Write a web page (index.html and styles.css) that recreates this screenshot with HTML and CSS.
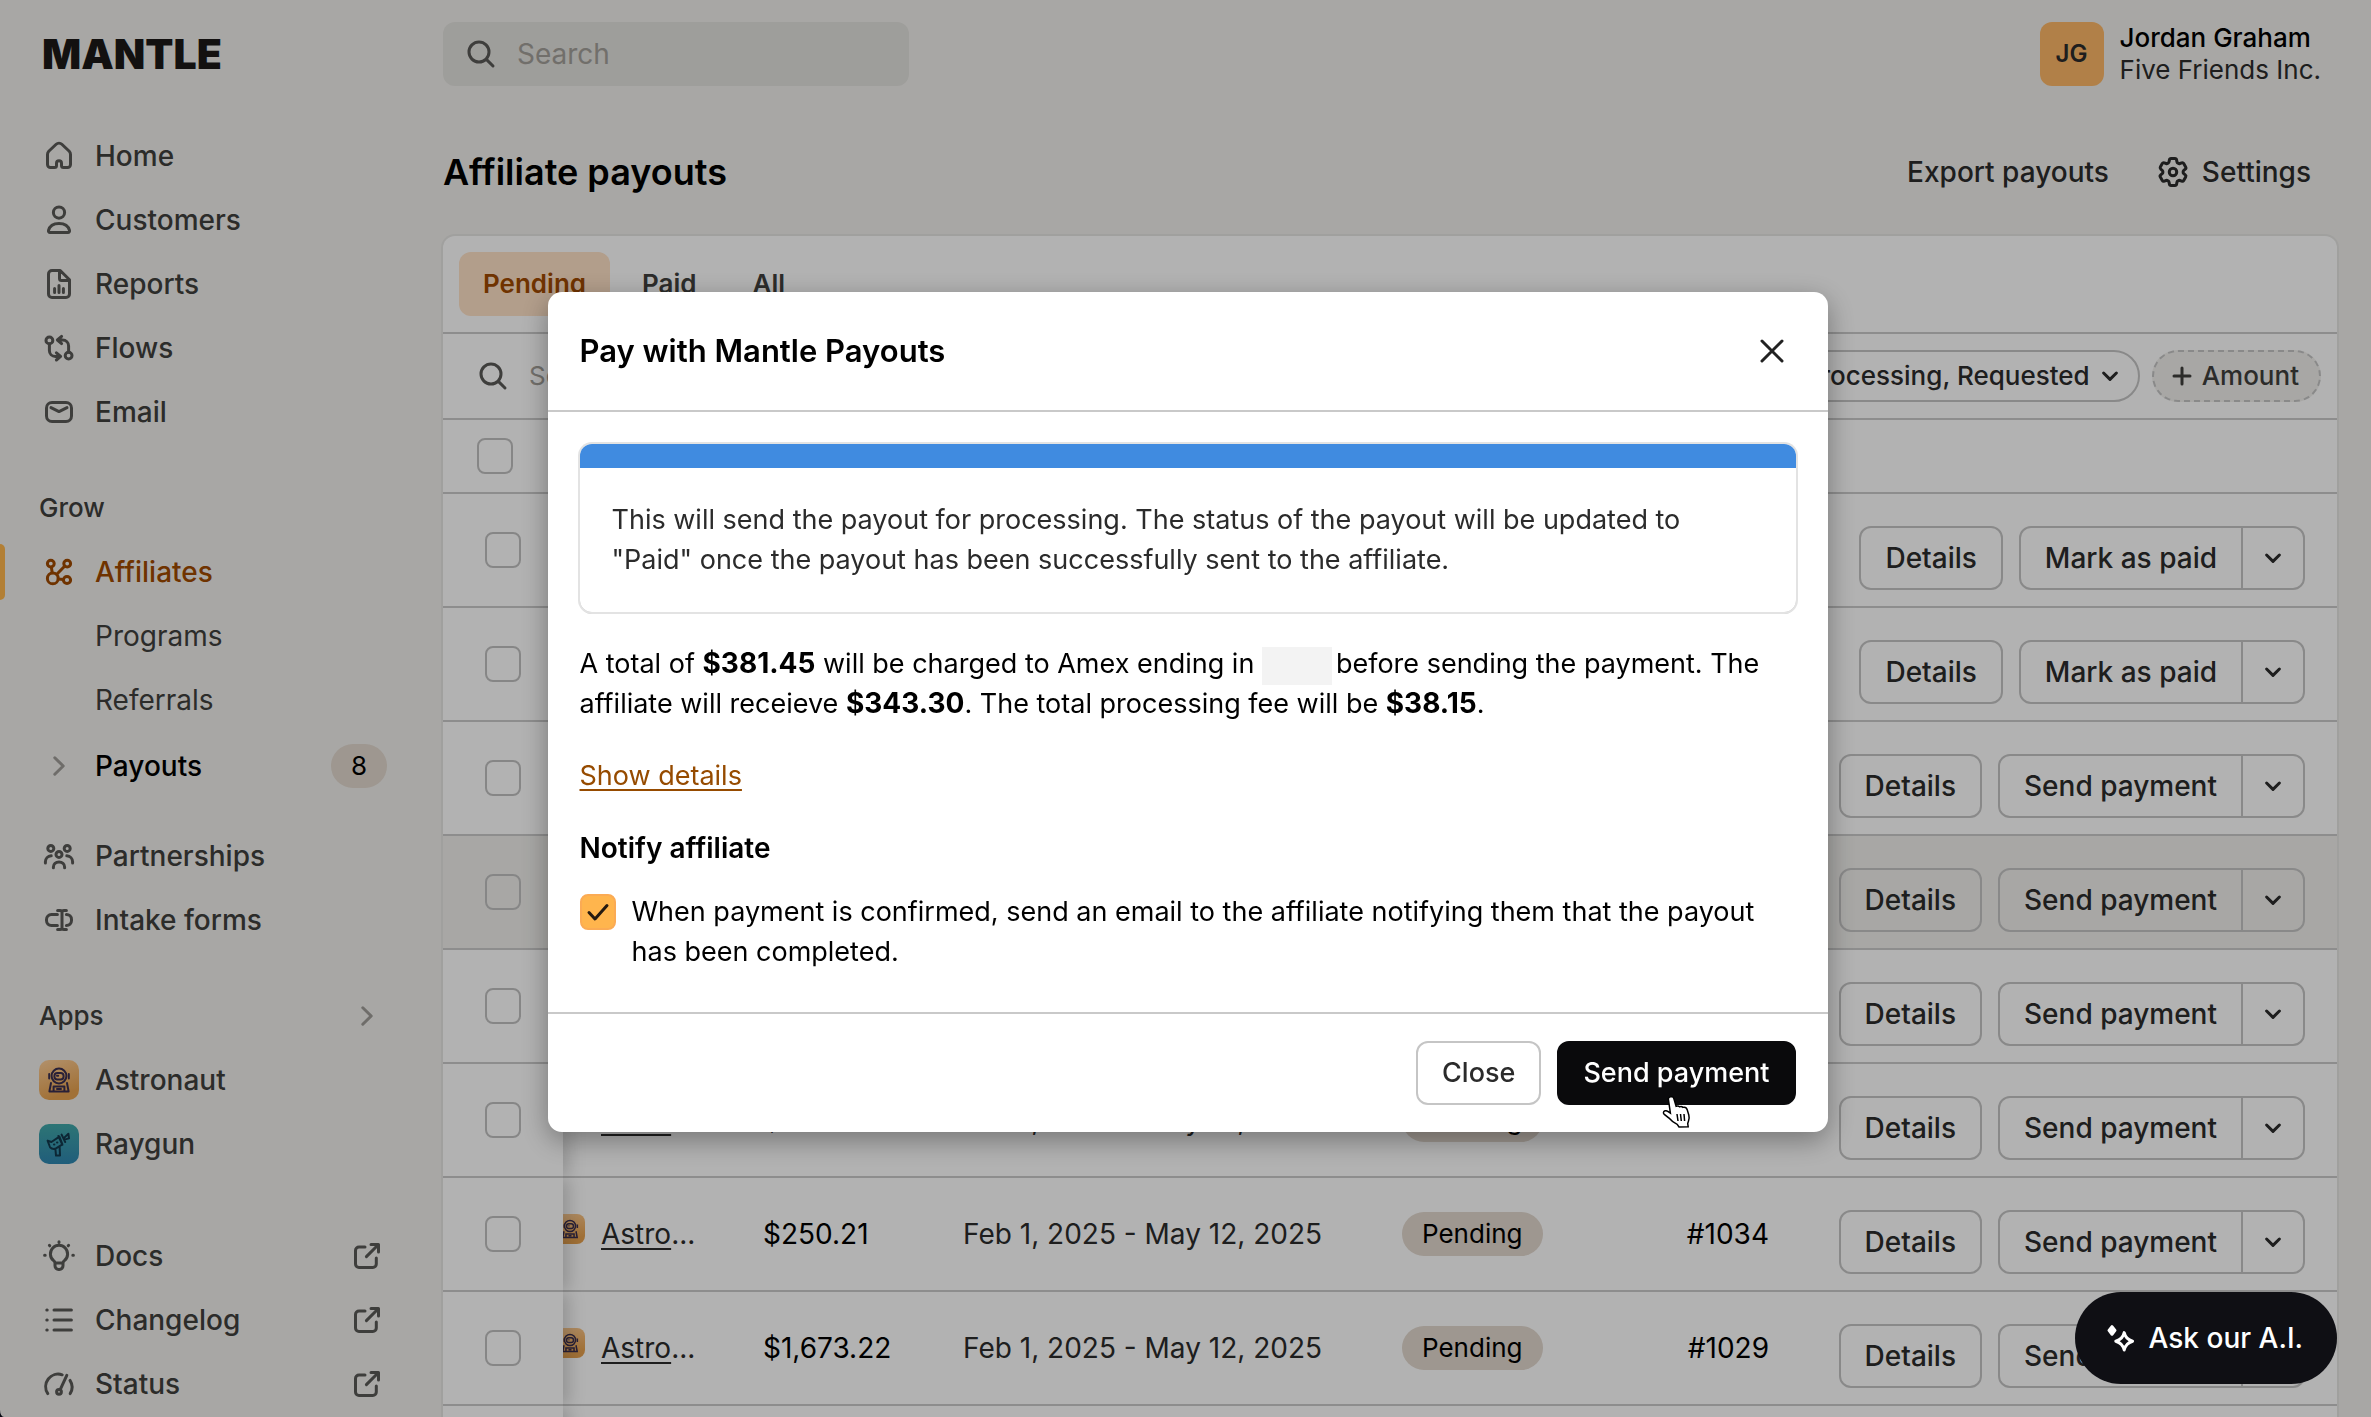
FILE: index.html
```html
<!DOCTYPE html>
<html lang="en">
<head>
  <meta charset="UTF-8">
  <meta name="viewport" content="width=device-width, initial-scale=1">
  <title>Affiliate payouts - Mantle</title>
  <link rel="stylesheet" href="styles.css">
</head>
<body>
  <!-- Icon sprite -->
  <svg class="sprite" xmlns="http://www.w3.org/2000/svg">
    <symbol id="i-home" viewBox="0 0 20 20"><path d="M4.25 9.2c0-.6.23-1.15.63-1.57l3.7-3.5c.8-.75 2.04-.75 2.84 0l3.7 3.5c.4.42.63.97.63 1.57v5.05c0 .83-.67 1.5-1.5 1.5h-2a1 1 0 0 1-1-1v-1.1c0-.7-.55-1.25-1.25-1.25s-1.25.55-1.25 1.25v1.1a1 1 0 0 1-1 1h-2c-.83 0-1.5-.67-1.5-1.5z"/></symbol>
    <symbol id="i-user" viewBox="0 0 20 20"><circle cx="10" cy="6.3" r="2.8"/><path d="M4.75 15.2c.55-2.2 2.65-3.5 5.25-3.5s4.7 1.3 5.25 3.5c.12.6-.2 1.05-.75 1.05h-9c-.55 0-.87-.45-.75-1.05z"/></symbol>
    <symbol id="i-report" viewBox="0 0 20 20"><path d="M10.6 3.25H6.5c-.97 0-1.75.78-1.75 1.75v10c0 .97.78 1.75 1.75 1.75h7c.97 0 1.75-.78 1.75-1.75V7.9zM10.25 3.5v3.75c0 .55.45 1 1 1H15M7.8 12.3v1.9M10 10.8v3.4M12.2 12.3v1.9"/></symbol>
    <symbol id="i-flow" viewBox="0 0 20 20"><circle cx="5.2" cy="6.2" r="1.7"/><circle cx="14.8" cy="13.8" r="1.7"/><path d="M5.2 8v3.2c0 1.7 1.3 3 3 3h2.3M8.7 12.4l2.1 1.8-2.1 1.8M14.8 12V9c0-1.7-1.3-3-3-3H9.5M11.3 4.2 9.2 6l2.1 1.8"/></symbol>
    <symbol id="i-mail" viewBox="0 0 20 20"><rect x="3.75" y="5.25" width="12.5" height="9.5" rx="2.75"/><path d="m6 7.8 4 2 4-2"/></symbol>
    <symbol id="i-affiliate" viewBox="0 0 20 20"><circle cx="5.9" cy="5.8" r="1.7"/><circle cx="14.1" cy="5.8" r="1.7"/><circle cx="6.9" cy="13.2" r="2.7"/><circle cx="14" cy="14" r="1.8"/><path d="m6.2 7.6.4 2.8M12.8 7.1l-3.9 4M9.6 13.5l2.5.2"/></symbol>
    <symbol id="i-right" viewBox="0 0 20 20"><path d="m7.9 5.9 4.2 4.1-4.2 4.1"/></symbol>
    <symbol id="i-down" viewBox="0 0 20 20"><path d="m6.8 8.5 3.2 3.2 3.2-3.2"/></symbol>
    <symbol id="i-people" viewBox="0 0 20 20"><circle cx="5.9" cy="6.2" r="1.5"/><circle cx="14.1" cy="6.2" r="1.5"/><circle cx="10" cy="9.2" r="1.5"/><path d="M3.2 13.5v-.6c0-1.6 1.2-2.9 2.9-3M16.8 13.5v-.6c0-1.6-1.2-2.9-2.9-3M7.2 15.9v-.4c0-1.5 1.2-2.5 2.8-2.5s2.8 1 2.8 2.5v.4"/></symbol>
    <symbol id="i-form" viewBox="0 0 20 20"><path d="M9.2 7.25h-3c-1.4 0-2.45 1.1-2.45 2.45v.6c0 1.4 1.1 2.45 2.45 2.45h3M13.7 7.25c1.45 0 2.55 1.1 2.55 2.45v.6c0 1.4-1.1 2.45-2.55 2.45M11.5 5.5v9M9.3 5.2h1.2c.6 0 1 .4 1 .9 0-.5.4-.9 1-.9h1.2M9.3 14.8h1.2c.6 0 1-.4 1-.9 0 .5.4.9 1 .9h1.2"/></symbol>
    <symbol id="i-bulb" viewBox="0 0 20 20"><path d="M8 13.6c0-.6-.3-1-.8-1.4a4.3 4.3 0 1 1 5.6 0c-.5.4-.8.8-.8 1.4v1.3a1.8 1.8 0 0 1-1.8 1.8h-.4A1.8 1.8 0 0 1 8 14.9zM8.2 13.5h3.6M10 2.9v.3M5.2 4.7l.2.2M14.8 4.7l-.2.2M2.8 9.6h.3M16.9 9.6h.3"/></symbol>
    <symbol id="i-list" viewBox="0 0 20 20"><path d="M3.9 5h.2M3.9 10h.2M3.9 15h.2M7.5 5h8.7M7.5 10h8.7M7.5 15h8.7"/></symbol>
    <symbol id="i-gauge" viewBox="0 0 20 20"><circle cx="10" cy="13.9" r="1.2"/><path d="M4.4 14.8A6.25 6.25 0 0 1 11.6 5.4M15.6 14.8a6.25 6.25 0 0 0-.1-6.6M10.6 12.8l3.3-7.1"/></symbol>
    <symbol id="i-external" viewBox="0 0 20 20"><path d="M9 5.5H6A1.75 1.75 0 0 0 4.25 7.25V14c0 .97.78 1.75 1.75 1.75h6.9c.97 0 1.75-.78 1.75-1.75v-3M9.7 10.3l5.8-5.8M12 4.25h3.75V8"/></symbol>
    <symbol id="i-search" viewBox="0 0 20 20"><circle cx="9" cy="9" r="5"/><path d="m12.8 12.8 3.2 3.2"/></symbol>
    <symbol id="i-close" viewBox="0 0 20 20"><path d="m5 5 10 10M15 5 5 15"/></symbol>
    <symbol id="i-plus" viewBox="0 0 20 20"><path d="M10 6v8M6 10h8"/></symbol>
    <symbol id="i-gear" viewBox="0 0 24 24"><path d="M9.594 3.94c.09-.542.56-.94 1.11-.94h2.593c.55 0 1.02.398 1.11.94l.213 1.281c.063.374.313.686.645.87.074.04.147.083.22.127.325.196.72.257 1.075.124l1.217-.456a1.125 1.125 0 0 1 1.37.49l1.296 2.247a1.125 1.125 0 0 1-.26 1.431l-1.003.827c-.293.241-.438.613-.43.992a7.723 7.723 0 0 1 0 .255c-.008.378.137.75.43.991l1.004.827c.424.35.534.955.26 1.43l-1.298 2.247a1.125 1.125 0 0 1-1.369.491l-1.217-.456c-.355-.133-.75-.072-1.076.124a6.47 6.47 0 0 1-.22.128c-.331.183-.581.495-.644.869l-.213 1.281c-.09.543-.56.94-1.11.94h-2.594c-.55 0-1.019-.398-1.11-.94l-.213-1.281c-.062-.374-.312-.686-.644-.87a6.52 6.52 0 0 1-.22-.127c-.325-.196-.72-.257-1.076-.124l-1.217.456a1.125 1.125 0 0 1-1.369-.49l-1.297-2.247a1.125 1.125 0 0 1 .26-1.431l1.004-.827c.292-.24.437-.613.43-.991a6.932 6.932 0 0 1 0-.255c.007-.38-.138-.751-.43-.992l-1.004-.827a1.125 1.125 0 0 1-.26-1.43l1.297-2.247a1.125 1.125 0 0 1 1.37-.491l1.216.456c.356.133.751.072 1.076-.124.072-.044.146-.086.22-.128.332-.183.582-.495.644-.869z"/><circle cx="12" cy="12" r="2.5"/></symbol>
    <symbol id="i-sparkle" viewBox="0 0 20 20"><path d="M5.5 4.3 7 6.2 5.5 8.1 4 6.2z" fill="currentColor"/><path d="M11.6 7.3c.5 2.3 1.8 3.6 4.2 4.3-2.4.7-3.7 2-4.2 4.4-.5-2.4-1.8-3.7-4.2-4.4 2.4-.7 3.7-2 4.2-4.3z"/></symbol>
    <symbol id="i-astronaut" viewBox="0 0 20 20"><circle cx="10" cy="8" r="3.7"/><rect x="7.7" y="6.5" width="4.6" height="3.2" rx="1.5"/><path d="M5.1 7v2.3M14.9 7v2.3M6 11.5l-.8 4.2h9.6l-.8-4.2M7.3 15.5v-2.2h5.4v2.2M9 14.5h2M9 7.9h.6"/></symbol>
    <symbol id="i-raygun" viewBox="0 0 20 20"><path d="m4.3 8.3 1.9.7 4-2.7 1.5 3.9-3 1.9c-1.6.8-3.4.1-3.6-1.6zM9.7 6l2 4.4M11.3 5.3l1.8 3.7M12.3 7.2l2.4-2.3.3 2.3-2.3.6M8.2 12.4l.3 3.4h2l-.2-4.6M7.5 10.2h.2M9 9.2h.2"/></symbol>
  </svg>

  <div class="app">
    <!-- Sidebar -->
    <aside class="sidebar">
      <div class="logo">MANTLE</div>

      <nav class="nav-group">
        <a href="#" class="nav-item"><svg class="icon"><use href="#i-home"/></svg>Home</a>
        <a href="#" class="nav-item"><svg class="icon"><use href="#i-user"/></svg>Customers</a>
        <a href="#" class="nav-item"><svg class="icon"><use href="#i-report"/></svg>Reports</a>
        <a href="#" class="nav-item"><svg class="icon"><use href="#i-flow"/></svg>Flows</a>
        <a href="#" class="nav-item"><svg class="icon"><use href="#i-mail"/></svg>Email</a>
      </nav>

      <div class="nav-label">Grow</div>
      <nav class="nav-group">
        <a href="#" class="nav-item active"><svg class="icon"><use href="#i-affiliate"/></svg>Affiliates</a>
        <a href="#" class="nav-item sub">Programs</a>
        <a href="#" class="nav-item sub">Referrals</a>
        <a href="#" class="nav-item current"><svg class="icon muted"><use href="#i-right"/></svg>Payouts<span class="badge count">8</span></a>
      </nav>
      <nav class="nav-group spaced">
        <a href="#" class="nav-item"><svg class="icon"><use href="#i-people"/></svg>Partnerships</a>
        <a href="#" class="nav-item"><svg class="icon"><use href="#i-form"/></svg>Intake forms</a>
      </nav>

      <div class="nav-label">Apps<svg class="icon muted"><use href="#i-right"/></svg></div>
      <nav class="nav-group">
        <a href="#" class="nav-item"><svg class="icon app-icon astronaut"><use href="#i-astronaut"/></svg>Astronaut</a>
        <a href="#" class="nav-item"><svg class="icon app-icon raygun"><use href="#i-raygun"/></svg>Raygun</a>
      </nav>

      <nav class="nav-group links">
        <a href="#" class="nav-item"><svg class="icon"><use href="#i-bulb"/></svg>Docs<svg class="icon end"><use href="#i-external"/></svg></a>
        <a href="#" class="nav-item"><svg class="icon"><use href="#i-list"/></svg>Changelog<svg class="icon end"><use href="#i-external"/></svg></a>
        <a href="#" class="nav-item"><svg class="icon"><use href="#i-gauge"/></svg>Status<svg class="icon end"><use href="#i-external"/></svg></a>
      </nav>
    </aside>

    <!-- Main content -->
    <main class="main">
      <header class="topbar">
        <label class="search">
          <svg class="icon"><use href="#i-search"/></svg>
          <input type="search" placeholder="Search" aria-label="Search">
        </label>
        <div class="account">
          <span class="avatar">JG</span>
          <div class="account-text">
            <div class="account-name">Jordan Graham</div>
            <div>Five Friends Inc.</div>
          </div>
        </div>
      </header>

      <div class="page-header">
        <h1>Affiliate payouts</h1>
        <div class="page-actions">
          <button class="plain">Export payouts</button>
          <button class="plain"><svg class="icon gear"><use href="#i-gear"/></svg>Settings</button>
        </div>
      </div>

      <section class="card">
        <div class="tabs">
          <button class="tab selected">Pending</button>
          <button class="tab">Paid</button>
          <button class="tab">All</button>
        </div>

        <div class="filters">
          <label class="table-search">
            <svg class="icon"><use href="#i-search"/></svg>
            <input type="search" placeholder="Search" aria-label="Search payouts">
          </label>
          <button class="pill">Processing, Requested<svg class="icon"><use href="#i-down"/></svg></button>
          <button class="pill dashed"><svg class="icon"><use href="#i-plus"/></svg>Amount</button>
        </div>

        <table class="payouts">
          <thead>
            <tr>
              <th class="col-check"><input type="checkbox" aria-label="Select all"></th>
              <th class="col-app">App</th>
              <th class="col-amount">Amount</th>
              <th class="col-period">Period</th>
              <th class="col-status">Status</th>
              <th class="col-number">Number</th>
              <th class="col-actions"></th>
            </tr>
          </thead>
          <tbody>
            <tr>
              <td class="col-check"><input type="checkbox" aria-label="Select #1041"></td>
              <td class="col-app"><div class="app-cell"><svg class="app-icon astronaut"><use href="#i-astronaut"/></svg><span><a href="#">Astro</a>...</span></div></td>
              <td class="amount">$250.21</td>
              <td>Feb 1, 2025 - May 12, 2025</td>
              <td><span class="badge">Pending</span></td>
              <td class="number">#1041</td>
              <td class="col-actions"><div class="actions"><button class="btn">Details</button><div class="split"><button>Mark as paid</button><button aria-label="More"><svg class="icon"><use href="#i-down"/></svg></button></div></div></td>
            </tr>
            <tr>
              <td class="col-check"><input type="checkbox" aria-label="Select #1040"></td>
              <td class="col-app"><div class="app-cell"><svg class="app-icon astronaut"><use href="#i-astronaut"/></svg><span><a href="#">Astro</a>...</span></div></td>
              <td class="amount">$250.21</td>
              <td>Feb 1, 2025 - May 12, 2025</td>
              <td><span class="badge">Pending</span></td>
              <td class="number">#1040</td>
              <td class="col-actions"><div class="actions"><button class="btn">Details</button><div class="split"><button>Mark as paid</button><button aria-label="More"><svg class="icon"><use href="#i-down"/></svg></button></div></div></td>
            </tr>
            <tr>
              <td class="col-check"><input type="checkbox" aria-label="Select #1039"></td>
              <td class="col-app"><div class="app-cell"><svg class="app-icon astronaut"><use href="#i-astronaut"/></svg><span><a href="#">Astro</a>...</span></div></td>
              <td class="amount">$250.21</td>
              <td>Feb 1, 2025 - May 12, 2025</td>
              <td><span class="badge">Pending</span></td>
              <td class="number">#1039</td>
              <td class="col-actions"><div class="actions"><button class="btn">Details</button><div class="split"><button>Send payment</button><button aria-label="More"><svg class="icon"><use href="#i-down"/></svg></button></div></div></td>
            </tr>
            <tr class="highlight">
              <td class="col-check"><input type="checkbox" aria-label="Select #1038"></td>
              <td class="col-app"><div class="app-cell"><svg class="app-icon astronaut"><use href="#i-astronaut"/></svg><span><a href="#">Astro</a>...</span></div></td>
              <td class="amount">$343.30</td>
              <td>Feb 1, 2025 - May 12, 2025</td>
              <td><span class="badge">Pending</span></td>
              <td class="number">#1038</td>
              <td class="col-actions"><div class="actions"><button class="btn">Details</button><div class="split"><button>Send payment</button><button aria-label="More"><svg class="icon"><use href="#i-down"/></svg></button></div></div></td>
            </tr>
            <tr>
              <td class="col-check"><input type="checkbox" aria-label="Select #1037"></td>
              <td class="col-app"><div class="app-cell"><svg class="app-icon astronaut"><use href="#i-astronaut"/></svg><span><a href="#">Astro</a>...</span></div></td>
              <td class="amount">$250.21</td>
              <td>Feb 1, 2025 - May 12, 2025</td>
              <td><span class="badge">Pending</span></td>
              <td class="number">#1037</td>
              <td class="col-actions"><div class="actions"><button class="btn">Details</button><div class="split"><button>Send payment</button><button aria-label="More"><svg class="icon"><use href="#i-down"/></svg></button></div></div></td>
            </tr>
            <tr>
              <td class="col-check"><input type="checkbox" aria-label="Select #1036"></td>
              <td class="col-app"><div class="app-cell"><svg class="app-icon astronaut"><use href="#i-astronaut"/></svg><span><a href="#">Astro</a>...</span></div></td>
              <td class="amount">$250.21</td>
              <td>Feb 1, 2025 - May 12, 2025</td>
              <td><span class="badge">Pending</span></td>
              <td class="number">#1036</td>
              <td class="col-actions"><div class="actions"><button class="btn">Details</button><div class="split"><button>Send payment</button><button aria-label="More"><svg class="icon"><use href="#i-down"/></svg></button></div></div></td>
            </tr>
            <tr>
              <td class="col-check"><input type="checkbox" aria-label="Select #1034"></td>
              <td class="col-app"><div class="app-cell"><svg class="app-icon astronaut"><use href="#i-astronaut"/></svg><span><a href="#">Astro</a>...</span></div></td>
              <td class="amount">$250.21</td>
              <td>Feb 1, 2025 - May 12, 2025</td>
              <td><span class="badge">Pending</span></td>
              <td class="number">#1034</td>
              <td class="col-actions"><div class="actions"><button class="btn">Details</button><div class="split"><button>Send payment</button><button aria-label="More"><svg class="icon"><use href="#i-down"/></svg></button></div></div></td>
            </tr>
            <tr>
              <td class="col-check"><input type="checkbox" aria-label="Select #1029"></td>
              <td class="col-app"><div class="app-cell"><svg class="app-icon astronaut"><use href="#i-astronaut"/></svg><span><a href="#">Astro</a>...</span></div></td>
              <td class="amount">$1,673.22</td>
              <td>Feb 1, 2025 - May 12, 2025</td>
              <td><span class="badge">Pending</span></td>
              <td class="number">#1029</td>
              <td class="col-actions"><div class="actions"><button class="btn">Details</button><div class="split"><button>Send payment</button><button aria-label="More"><svg class="icon"><use href="#i-down"/></svg></button></div></div></td>
            </tr>
            <tr class="filler">
              <td class="col-check"></td>
              <td colspan="6"></td>
            </tr>
          </tbody>
        </table>
      </section>
    </main>
  </div>

  <!-- Payment modal -->
  <div class="overlay">
    <div class="modal" role="dialog" aria-labelledby="modalTitle">
      <div class="modal-header">
        <h2 id="modalTitle">Pay with Mantle Payouts</h2>
        <button class="close" aria-label="Close dialog"><svg class="icon"><use href="#i-close"/></svg></button>
      </div>
      <div class="modal-body">
        <div class="banner">
          <p>This will send the payout for processing. The status of the payout will be updated to "Paid" once the payout has been successfully sent to the affiliate.</p>
        </div>
        <p>A total of <strong>$381.45</strong> will be charged to Amex ending in <span class="redacted"></span>before sending the payment. The affiliate will receieve <strong>$343.30</strong>. The total processing fee will be <strong>$38.15</strong>.</p>
        <a href="#" class="show-details">Show details</a>
        <h3>Notify affiliate</h3>
        <label class="notify">
          <input type="checkbox" checked>
          <span>When payment is confirmed, send an email to the affiliate notifying them that the payout has been completed.</span>
        </label>
      </div>
      <div class="modal-footer">
        <button class="btn">Close</button>
        <button class="btn primary">Send payment
          <svg class="cursor" viewBox="0 0 32 34"><path d="M9.5 1.8c1.5-.5 2.9.3 3.4 1.9l2.2 7.6c1.300-.6 2.600-.4 3.500.5 1.200-.6 2.500-.3 3.400.6 2-.6 3.600.4 4.200 2.300l1.600 5.300c.6 2.300.5 4-.3 6l-.8 2.500.5 3.200-9.200.3-1.800-2.600c-2.900-1.300-5.900-3.500-8.200-6.300l-5-4c-1.400-1.500 0-3.800 2.200-3.300 1.500.4 2.800 1.300 4.200 2.300L7.400 4.300c-.3-1.200.700-2.200 2.100-2.500z" fill="#fff" stroke="#000" stroke-width="1.5"/><path d="m16 19 1 7M19.500 19l.8 7M23 19l.6 7" fill="none" stroke="#000" stroke-width="1.5"/></svg>
        </button>
      </div>
    </div>
  </div>

  <button class="ask-ai"><svg class="icon"><use href="#i-sparkle"/></svg>Ask our A.I.</button>
</body>
</html>
```

FILE: styles.css
```css
/* Base */
* {
  box-sizing: border-box;
}

html, body {
  height: 100%;
  margin: 0;
  overflow: hidden;
}

body {
  font-family: Inter, "Liberation Sans", sans-serif;
  font-size: 28px;
  line-height: 40px;
  color: #2b2b2b;
  background: #0b0f1c;
}

h1, h2, h3, p {
  margin: 0;
}

a {
  color: inherit;
}

button, input {
  font: inherit;
  color: inherit;
}

button {
  display: flex;
  align-items: center;
  padding: 0;
  border: none;
  background: none;
  cursor: pointer;
  white-space: nowrap;
}

input[type="search"] {
  width: 100%;
  padding: 0;
  border: none;
  outline: none;
  background: none;
}

input[type="search"]::placeholder {
  color: #a3a09a;
}

input[type="checkbox"] {
  appearance: none;
  display: block;
  flex: none;
  width: 36px;
  height: 36px;
  margin: 0;
  border: 2px solid #c1c1c1;
  border-radius: 8px;
}

.sprite {
  display: none;
}

.icon {
  flex: none;
  width: 40px;
  height: 40px;
  fill: none;
  stroke: currentColor;
  stroke-width: 1.5;
  stroke-linecap: round;
  stroke-linejoin: round;
}

/* Layout */
.app {
  display: flex;
  height: 100%;
  overflow: hidden;
  background: #f1f0ed;
  border-bottom-left-radius: 4px 7px;
  isolation: isolate;
}

.sidebar {
  flex: none;
  width: 443px;
  padding: 0 56px 0 39px;
}

.main {
  flex: 1;
  min-width: 0;
  padding-right: 34px;
}

/* Sidebar */
.logo {
  height: 124px;
  padding: 22px 0 0 3px;
  font-size: 41px;
  font-weight: 900;
  line-height: 64px;
  color: #1c1917;
}

.nav-item {
  position: relative;
  display: flex;
  align-items: center;
  gap: 16px;
  height: 64px;
  font-weight: 500;
  color: #403f3d;
  text-decoration: none;
}

.nav-item .icon {
  color: #5a5957;
}

.nav-item.active,
.nav-item.active .icon {
  color: #9f4900;
}

.nav-item.active::before {
  content: "";
  position: absolute;
  left: -39px;
  width: 5px;
  height: 56px;
  border-radius: 0 6px 6px 0;
  background: #ffb74c;
}

.nav-item.sub {
  padding-left: 56px;
  font-weight: 400;
}

.nav-item.current {
  height: 68px;
  color: #000;
}

.nav-item .icon.muted,
.nav-label .icon {
  color: #9f9d99;
}

.nav-item .end,
.nav-item .count {
  margin-left: auto;
}

.nav-label {
  display: flex;
  align-items: center;
  justify-content: space-between;
  height: 64px;
  margin-top: 32px;
  font-size: 26px;
  font-weight: 500;
  color: #403f3d;
}

.nav-group.spaced {
  margin-top: 24px;
}

.nav-group.links {
  margin-top: 48px;
}

.badge {
  display: inline-block;
  height: 44px;
  padding: 0 20px;
  border-radius: 22px;
  background: #e2d8ce;
  color: #000;
  font-size: 26px;
  font-weight: 400;
  line-height: 44px;
}

.app-icon {
  flex: none;
  border-radius: 10px;
  fill: none;
  stroke-width: 1;
}

.app-icon.astronaut {
  background: linear-gradient(160deg, #ffd09a, #e7a24f 80%);
  stroke: #3a2f50;
}

.nav-item .app-icon.astronaut {
  color: #3a2f50;
}

.app-icon.raygun {
  background: linear-gradient(#41a8a8, #2f86b0);
}

.nav-item .app-icon.raygun {
  color: #12384c;
}

/* Top bar */
.topbar {
  display: flex;
  align-items: center;
  justify-content: space-between;
  height: 108px;
  padding-right: 16px;
}

.search {
  display: flex;
  align-items: center;
  gap: 16px;
  width: 466px;
  height: 64px;
  padding: 0 18px;
  border-radius: 12px;
  background: #e3e2de;
}

.search .icon,
.table-search .icon {
  color: #5a5957;
}

.account {
  display: flex;
  align-items: center;
  gap: 16px;
  font-size: 26px;
  line-height: 32px;
}

.avatar {
  width: 64px;
  height: 64px;
  border-radius: 12px;
  background: #feb868;
  font-size: 24px;
  font-weight: 600;
  line-height: 64px;
  text-align: center;
}

.account-name {
  font-weight: 500;
  color: #000;
}

.page-header {
  display: flex;
  align-items: center;
  justify-content: space-between;
  height: 128px;
  padding-right: 26px;
}

h1 {
  font-size: 36px;
  font-weight: 600;
  color: #000;
}

.page-actions {
  display: flex;
  gap: 46px;
}

.plain {
  gap: 11px;
  font-weight: 500;
}

.icon.gear {
  width: 36px;
  height: 36px;
  stroke-width: 2;
}

/* Card */
.card {
  border-radius: 12px;
  background: #fff;
  box-shadow: 0 0 0 2px #e6e5e3;
  overflow: hidden;
}

.tabs {
  display: flex;
  gap: 8px;
  padding: 16px;
  border-bottom: 2px solid #cbcbcb;
}

.tab {
  height: 64px;
  padding: 0 24px;
  border-radius: 12px;
  font-size: 26px;
  font-weight: 600;
  color: #403f3d;
}

.tab.selected {
  background: #ffe2c7;
  color: #9f4900;
}

.filters {
  display: flex;
  align-items: center;
  gap: 12px;
  height: 86px;
  padding: 0 16px 0 30px;
  border-bottom: 2px solid #cbcbcb;
  font-size: 26px;
}

.table-search {
  display: flex;
  flex: 1;
  align-items: center;
  gap: 16px;
}

.pill {
  height: 52px;
  padding: 0 8px 0 22px;
  border: 2px solid #c5c5c5;
  border-radius: 26px;
  font-weight: 500;
}

.pill.dashed {
  padding: 0 20px 0 8px;
  border-style: dashed;
  background: #f1f0ed;
  color: #403f3d;
}

/* Payouts table */
.payouts {
  width: 100%;
  table-layout: fixed;
  border-collapse: separate;
  border-spacing: 0;
}

.payouts th,
.payouts td {
  padding: 0 32px;
  border-bottom: 2px solid #cbcbcb;
  text-align: left;
  white-space: nowrap;
}

.payouts th {
  height: 74px;
  font-size: 26px;
  font-weight: 500;
}

.payouts td {
  height: 114px;
}

.payouts .col-check {
  width: 120px;
  padding-left: 34px;
}

.payouts td.col-check {
  position: relative;
  z-index: 1;
  padding-left: 42px;
  background: #fff;
  box-shadow: 6px 0 16px rgba(0, 0, 0, 0.18);
  clip-path: inset(0 -24px 0 0);
}

.payouts .col-app {
  width: 168px;
  padding: 0;
}

.payouts .col-amount {
  width: 200px;
}

.payouts .col-status {
  width: 230px;
}

.payouts .col-number {
  width: 201px;
}

.payouts .col-actions {
  width: 536px;
}

.payouts td.col-actions {
  padding: 32px 32px 16px;
}

.payouts .highlight td {
  background: #f1f0ed;
}

.payouts .filler td {
  border-bottom: none;
}

.payouts .amount,
.payouts .number {
  color: #000;
}

.payouts .number {
  text-align: right;
}

.app-cell {
  display: flex;
  align-items: center;
  gap: 16px;
}

.app-cell .app-icon {
  width: 30px;
  height: 30px;
  margin: 0 0 10px -8px;
  border-radius: 8px;
}

.app-cell a {
  text-decoration-thickness: 2px;
  text-underline-offset: 4px;
}

.actions {
  display: flex;
  justify-content: flex-end;
  gap: 16px;
}

.btn,
.split {
  height: 64px;
  border: 2px solid #c5c5c5;
  border-radius: 12px;
  font-weight: 500;
}

.btn {
  padding: 0 24px;
}

.split {
  display: flex;
}

.split button {
  padding: 0 24px;
}

.split button + button {
  padding: 0 10px;
  border-left: 2px solid #c5c5c5;
}

/* Modal */
.overlay {
  position: fixed;
  inset: 0;
  z-index: 10;
  display: flex;
  align-items: flex-start;
  justify-content: center;
  padding: 292px 0 0 4px;
  background: rgba(0, 0, 0, 0.3);
}

.modal {
  width: 1280px;
  border-radius: 14px;
  background: #fff;
  color: #000;
  font-size: 27px;
  box-shadow: 0 8px 28px rgba(0, 0, 0, 0.35);
}

.modal-header {
  display: flex;
  align-items: center;
  justify-content: space-between;
  height: 120px;
  padding: 0 36px 0 32px;
  border-bottom: 2px solid #c9c9c9;
}

h2 {
  font-size: 31px;
  font-weight: 600;
}

.close .icon {
  color: #222;
}

.modal-body {
  display: flex;
  flex-direction: column;
  align-items: flex-start;
  gap: 32px;
  padding: 32px 32px 40px;
}

.banner {
  padding: 32px;
  border-top: 24px solid #408be0;
  border-radius: 12px;
  box-shadow: 0 0 0 2px #e3e3e3, 0 2px 0 #c9c9c9;
  color: #2b2b2b;
}

.redacted {
  display: inline-block;
  width: 70px;
  height: 38px;
  margin: -4px 4px -4px 0;
  background: #f3f3f3;
  vertical-align: middle;
}

strong {
  font-size: 28px;
  font-weight: 700;
  line-height: 1;
}

.show-details {
  color: #964b00;
  text-decoration-thickness: 2px;
  text-underline-offset: 4px;
}

h3 {
  font-size: 28px;
  font-weight: 600;
}

.notify {
  display: flex;
  gap: 16px;
  margin-top: -8px;
}

.notify input {
  margin-top: 2px;
}

.notify input:checked {
  border-color: #fbab54;
  background: #ffb54d url("data:image/svg+xml,%3Csvg xmlns='http://www.w3.org/2000/svg' viewBox='0 0 32 32'%3E%3Cpath d='m7 16.5 6 6.5L25 9.5' fill='none' stroke='%23251a10' stroke-width='3' stroke-linecap='round' stroke-linejoin='round'/%3E%3C/svg%3E");
}

.modal-footer {
  display: flex;
  align-items: center;
  justify-content: flex-end;
  gap: 16px;
  height: 120px;
  padding: 0 32px;
  border-top: 2px solid #c9c9c9;
}

.modal-footer .btn {
  color: #2b2b2b;
}

.modal-footer .btn.primary {
  position: relative;
  border-color: #0a0a0c;
  background: #0a0a0c;
  color: #fff;
}

.cursor {
  position: absolute;
  top: 52px;
  left: 102px;
  width: 32px;
  height: 34px;
}

/* Floating button */
.ask-ai {
  position: fixed;
  right: 34px;
  bottom: 33px;
  z-index: 20;
  gap: 8px;
  height: 92px;
  padding: 0 34px 0 26px;
  border-radius: 46px;
  background: #0f0f14;
  color: #fff;
  font-weight: 500;
}
```
